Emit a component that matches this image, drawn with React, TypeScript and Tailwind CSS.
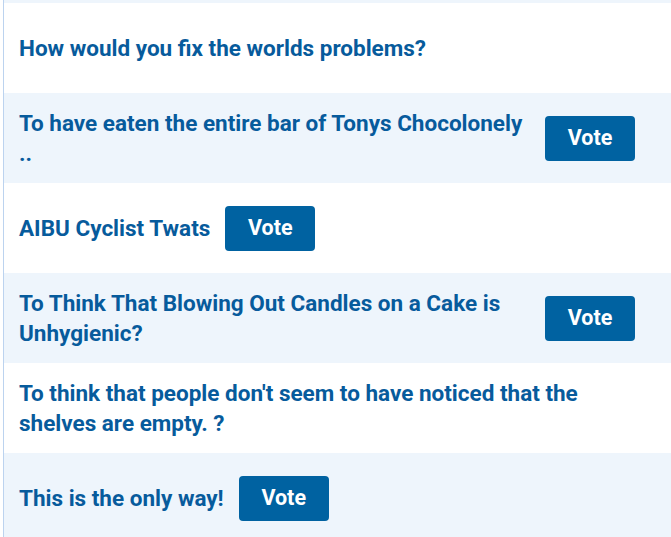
const rows = [
  { title: 'How would you fix the worlds problems?', vote: false },
  { title: 'To have eaten the entire bar of Tonys Chocolonely ..', vote: true, grow: true },
  { title: 'AIBU Cyclist Twats', vote: true },
  { title: 'To Think That Blowing Out Candles on a Cake is Unhygienic?', vote: true, grow: true },
  { title: "To think that people don't seem to have noticed that the shelves are empty. ?", vote: false },
  { title: 'This is the only way!', vote: true },
];

export default function App() {
  return (
    <div className="min-h-screen bg-white pl-[3px]" style={{ fontFamily: 'Roboto, "Noto Sans", sans-serif' }}>
      <div className="border-l border-[#bcd3ef]">
        {/* end of previous row */}
        <div className="h-[3px] bg-[#eef5fc]" />
        {rows.map((row, i) => (
          <div
            key={i}
            className={`flex h-[90px] items-center gap-[15px] pl-[15px] pr-[36px] ${i % 2 === 1 ? 'bg-[#eef5fc]' : 'bg-white'}`}
          >
            <p className={`text-[22.5px] font-bold leading-[30px] text-[#075b9c] ${row.grow ? 'flex-1' : ''}`}>{row.title}</p>
            {row.vote && (
              <button className="h-[45px] w-[90px] shrink-0 rounded-[4px] bg-[#0062a1] text-[21.5px] font-bold text-white">
                Vote
              </button>
            )}
          </div>
        ))}
      </div>
    </div>
  );
}
